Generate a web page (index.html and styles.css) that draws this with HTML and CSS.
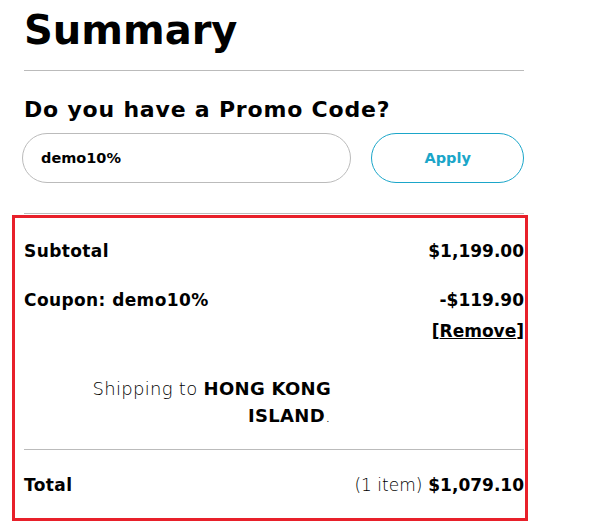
FILE: index.html
```
<!DOCTYPE html>
<html lang="en">
<head>
    <meta charset="UTF-8">
    <meta name="viewport" content="width=device-width, initial-scale=1.0">
    <title>Cart Summary</title>
    <link rel="stylesheet" href="styles.css">
</head>
<body>
    <div class="summary">
        <h1 class="summary-title">Summary</h1>
        <hr class="divider">

        <!-- Promo code -->
        <h2 class="promo-title">Do you have a Promo Code?</h2>
        <form class="promo-form" onsubmit="return false;">
            <input type="text" class="promo-input" value="demo10%">
            <button type="submit" class="promo-button">Apply</button>
        </form>
        <hr class="divider divider-promo">

        <!-- Totals -->
        <div class="totals">
            <div class="totals-row row-subtotal">
                <span class="totals-label">Subtotal</span>
                <span class="totals-value">$1,199.00</span>
            </div>
            <div class="totals-row row-coupon">
                <span class="totals-label">Coupon: demo10%</span>
                <span class="totals-value">-$119.90</span>
            </div>
            <div class="remove-line"><a href="#" class="remove-link">[<u>Remove</u>]</a></div>

            <div class="shipping">Shipping to <strong>HONG KONG ISLAND</strong>.</div>

            <hr class="divider divider-total">
            <div class="totals-row row-total">
                <span class="totals-label">Total</span>
                <span class="totals-value"><span class="item-count">(1 item)</span> $1,079.10</span>
            </div>
        </div>
    </div>
</body>
</html>
```

FILE: styles.css
```
/* General Styling */
body { margin: 0; font-family: "DejaVu Sans", Verdana, sans-serif; color: #000; background-color: #fff; }
.summary { width: 500px; padding: 0 24px; }

.summary-title { font-size: 40px; line-height: 52px; font-weight: 700; margin: 4px 0 14px; }
.divider { border: 0; border-top: 1px solid #bbb; margin: 0; }

/* Promo Styling */
.promo-title { font-size: 22px; line-height: 28px; font-weight: 700; margin: 25px 0 9px; letter-spacing: 0.8px; }
.promo-form { display: flex; gap: 20px; }
.promo-input {
    box-sizing: border-box; width: 330px; height: 50px; margin-left: -2px;
    padding: 0 18px; border: 1px solid #bbb; border-radius: 25px;
    font-family: inherit; font-size: 14.5px; font-weight: 700; color: #000; outline: none;
}
.promo-button {
    box-sizing: border-box; width: 153px; height: 50px;
    border: 1px solid #1ba6c9; border-radius: 25px; background-color: #fff;
    color: #1ba6c9; font-family: inherit; font-size: 14.5px; font-weight: 700; cursor: pointer;
}
.divider-promo { margin-top: 30px; }

/* Totals Styling */
.totals { margin: 1px 0 0 -12px; width: 516px; padding: 20px 1px 20px 9px; border: 3px solid #e8202a; box-sizing: border-box; }
.totals-row { display: flex; justify-content: space-between; font-size: 17px; line-height: 26px; font-weight: 700; }
.totals-label { letter-spacing: 0.4px; }
.row-coupon { margin-top: 23px; }
.remove-line { text-align: right; font-size: 17px; line-height: 26px; font-weight: 700; margin-top: 5px; }
.remove-link { color: #000; text-decoration: none; }

.shipping { width: 250px; margin: 31px 0 0 57px; text-align: right; font-size: 18px; line-height: 27px; font-weight: 200; letter-spacing: 0.3px; }
.shipping strong { font-weight: 700; }

.divider-total { margin-top: 20px; }
.row-total { margin-top: 22px; }
.item-count { font-weight: 200; }
```
